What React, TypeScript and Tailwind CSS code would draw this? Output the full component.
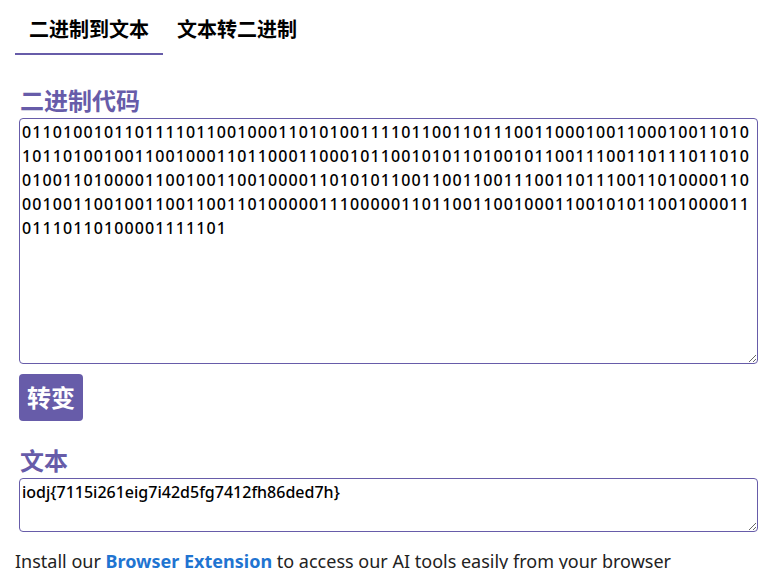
import { useState } from 'react';

const binaryLines = [
  '01101001011011110110010001101010011110110011011100110001001100010011010',
  '10110100100110010001101100011000101100101011010010110011100110111011010',
  '01001101000011001001100100001101010110011001100111001101110011010000110',
  '00100110010011001100110100000111000001101100110010001100101011001000011',
  '01110110100001111101',
];

export default function App() {
  const [tab, setTab] = useState<'b2t' | 't2b'>('b2t');
  const [binary, setBinary] = useState(binaryLines.join('\n'));
  const [text, setText] = useState('iodj{7115i261eig7i42d5fg7412fh86ded7h}');

  return (
    <div className="min-h-screen bg-white px-[15px] pt-[14px] font-['Noto_Sans','Noto_Sans_CJK_SC',sans-serif] text-black">
      <div className="flex">
        <button
          onClick={() => setTab('b2t')}
          className={`px-[14px] pt-[3px] pb-[10px] text-[20px] leading-[26px] font-bold border-b-2 ${
            tab === 'b2t' ? 'border-[#675ca9]' : 'border-transparent'
          }`}
        >
          二进制到文本
        </button>
        <button
          onClick={() => setTab('t2b')}
          className={`px-[14px] pt-[3px] pb-[10px] text-[20px] leading-[26px] font-bold border-b-2 ${
            tab === 't2b' ? 'border-[#675ca9]' : 'border-transparent'
          }`}
        >
          文本转二进制
        </button>
      </div>

      <div className="pl-[4px] pt-[30px]">
        <label className="block text-[24px] leading-[32px] font-semibold text-[#675ca9] pl-[1px]">二进制代码</label>
        <textarea
          value={binary}
          onChange={(e) => setBinary(e.target.value)}
          className="block w-[739px] h-[246px] mt-[1px] border border-[#675ca9] rounded-[4px] px-[2px] py-[1px] text-[16px] leading-[24px] font-medium tracking-[1.1px] outline-none"
        />
        <button className="mt-[10px] bg-[#675ca9] text-white rounded-[4px] px-[8px] py-[6px] text-[24px] leading-[35px] font-bold">
          转变
        </button>

        <label className="block mt-[24px] text-[24px] leading-[32px] font-semibold text-[#675ca9] pl-[1px]">文本</label>
        <textarea
          value={text}
          onChange={(e) => setText(e.target.value)}
          className="block w-[739px] h-[54px] mt-[1px] border border-[#675ca9] rounded-[4px] px-[2px] py-[1px] text-[16px] leading-[24px] font-medium outline-none"
        />
      </div>

      <p className="mt-[16px] text-[18px] leading-[26px] text-[#222]">
        Install our <a href="#" className="font-bold text-[#1f74d1]">Browser Extension</a> to access our AI tools easily from your browser
      </p>
    </div>
  );
}
